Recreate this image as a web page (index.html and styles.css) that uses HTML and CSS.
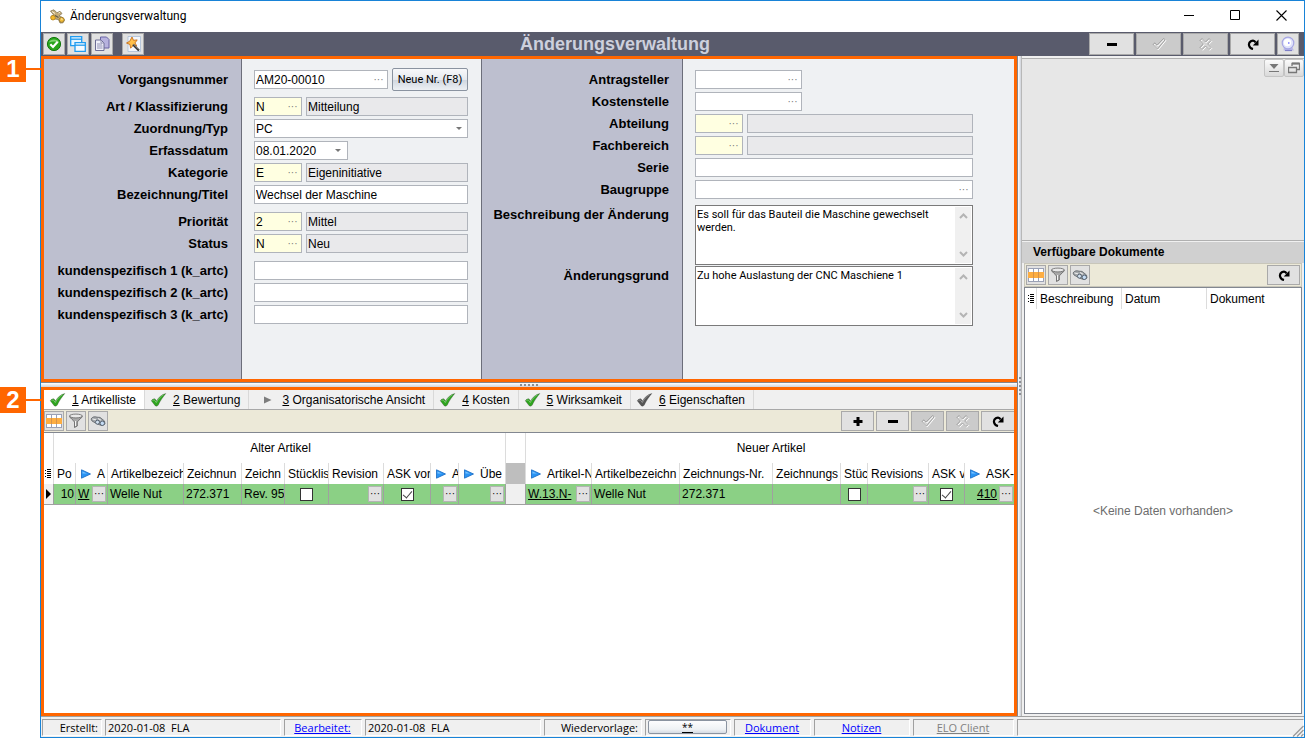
FILE: index.html
```html
<!DOCTYPE html>
<html lang="de">
<head>
<meta charset="utf-8">
<title>Änderungsverwaltung</title>
<link rel="stylesheet" href="styles.css">
</head>
<body>
<svg class="sprite" aria-hidden="true">
  <symbol id="i-check" viewBox="0 0 16 16"><path d="M.8 8.800C1.800 7 3.800 6.300 4.800 7.200L6 9C8 5.500 11 2.500 15.300 1.500 12.500 5 9.500 9 7.800 13 7 14.500 5 14.500 4.300 13.200z" fill="currentColor" stroke="#222" stroke-opacity=".35" stroke-width=".8"/><path d="M2 8.500C3.500 7.500 4.300 8 5.800 10.500 8 6.500 10.500 4 13 2.800" fill="none" stroke="#fff" stroke-opacity=".35"/></symbol>
  <symbol id="i-play" viewBox="0 0 10 10"><path d="M.5.800 9.500 5 .5 9.200z" fill="#2a94f4" stroke="#1467c0" stroke-width=".8"/><path d="M1.500 2.500 6 4.600H1.500z" fill="#7cc4ff"/></symbol>
  <symbol id="i-tri" viewBox="0 0 10 10"><path d="M1 1.500 8.500 5 1 8.500z" fill="#7d7d7d"/></symbol>
  <symbol id="i-grid" viewBox="0 0 16 16"><path d="M0 1h16v14H0z" fill="#fff"/><path d="M0 1.500h16M0 14.500h16M.5 1v14M5.500 1v14M10.500 1v14M15.500 1v14" stroke="#9aa1b5" fill="none"/><path d="M0 5h16v6H0z" fill="#fdae42"/><path d="M5.500 5v6M10.500 5v6" stroke="#d8934a"/></symbol>
  <symbol id="i-funnel" viewBox="0 0 16 16"><path d="M1.500 3c0 2 4.500 4.500 5 6v5.500l2.800-1.500V9c.5-1.500 5-4 5-6z" fill="#a9a9a9" stroke="#5f5f5f" stroke-width=".8"/><ellipse cx="7.900" cy="3" rx="6.400" ry="1.900" fill="#e9e9e9" stroke="#666" stroke-width=".8"/><path d="M7.500 8v5" stroke="#f4f4f4"/></symbol>
  <symbol id="i-binoc" viewBox="0 0 16 16"><path d="M1 6C2.500 3.500 5 3.500 7 4.200l3 .2 4.500 3.600.5 3-3 1.500-3.500-1-3-1.500-3.500-2z" fill="#a3a7ab" stroke="#5a5f65" stroke-width=".8"/><circle cx="7.500" cy="9.200" r="2" fill="#d3e2f0" stroke="#4f5b6a" stroke-width=".9"/><circle cx="12.300" cy="10.300" r="2.200" fill="#c5dcf5" stroke="#4f5b6a" stroke-width=".9"/><path d="M2.500 6 6 6.800M8 5.500l3 1.700" stroke="#eee"/></symbol>
  <symbol id="i-plus" viewBox="0 0 12 12"><path d="M6 2v9M1.500 6.500h9" stroke="#000" stroke-width="3"/></symbol>
  <symbol id="i-minus" viewBox="0 0 12 12"><path d="M1 6.500h10" stroke="#000" stroke-width="3"/></symbol>
  <symbol id="i-okoff" viewBox="0 0 16 16"><path d="M2 8.500 4 6.800l2 2.400L12.500 2.500l1.700 1.200L6.500 13z" fill="#d6d6d6" stroke="#fff" transform="translate(.8 .8)"/><path d="M2 8.500 4 6.800l2 2.400L12.500 2.500l1.700 1.200L6.500 13z" fill="none" stroke="#a2a2a2"/></symbol>
  <symbol id="i-xoff" viewBox="0 0 16 16"><path d="M4 2.500 7.500 6 11 2.500l2 2L9.700 8l3.300 3.500-2 2L7.500 10 4 13.500l-2-2L5.300 8 2 4.500z" fill="#d4d4d4" stroke="#fff" transform="translate(.8 .8)"/><path d="M4 2.500 7.500 6 11 2.500l2 2L9.700 8l3.300 3.500-2 2L7.500 10 4 13.500l-2-2L5.300 8 2 4.500z" fill="none" stroke="#a2a2a2"/></symbol>
  <symbol id="i-redo" viewBox="0 0 12 12"><path d="M6 11C1.500 10 .8 5 3.800 3.300 5.800 2.300 7.800 3 8.600 4.600" fill="none" stroke="#000" stroke-width="2.200"/><path d="M11.500 1.500V7.500H5.800z"/></symbol>
  <symbol id="i-list" viewBox="0 0 8 10"><path d="M1 1.500h1M1 4.500h1M1 7.500h1M3 .5h4M3 2.500h4M3 4.500h4M3 6.500h4M3 8.500h4" stroke="#000" stroke-width="1"/></symbol>
</svg>

<div class="window">
  <header class="titlebar">
    <svg class="app-icon" viewBox="0 0 16 16"><path d="M1.500 3 5 1.800l3 3 3-1.500 2 2.200-3 2.500 3.500 1.500 2 2.500-1.500 2.800-3 .2-1.500-3.500L6 11l-3.500.5L2 8.500l2.500-1.700z" fill="#c3ab78" stroke="#857755" stroke-width=".8"/><circle cx="4" cy="9.700" r="2.300" fill="#f2b92c" stroke="#b5821a" stroke-width=".8"/><circle cx="12.700" cy="11.800" r="2.500" fill="#f1bd3a" stroke="#94712a" stroke-width=".8"/><path d="M3 3.500 6 5.500M9.500 5l1.500-.7M12 10.800l1.500.6" stroke="#f7efd9"/><path d="m6 7.500 3.500 2" stroke="#5d5746" stroke-width="1.200"/></svg>
    <span class="caption">Änderungsverwaltung</span>
    <button class="win-btn" aria-label="Minimieren"><svg viewBox="0 0 11 11"><path d="M0 5.500h10" stroke="#000"/></svg></button>
    <button class="win-btn" aria-label="Maximieren"><svg viewBox="0 0 11 11"><path d="M.5.500h9v9h-9z" fill="none" stroke="#000"/></svg></button>
    <button class="win-btn" aria-label="Schließen"><svg viewBox="0 0 11 11"><path d="M.5.500l10 10M10.500.500l-10 10" stroke="#000" stroke-width="1.100"/></svg></button>
  </header>

  <div class="toolbar">
    <div class="tools">
      <button class="tool" aria-label="Bestätigen"><svg viewBox="0 0 16 16"><circle cx="8" cy="8" r="6.600" fill="#28a51c" stroke="#14780d"/><path d="M2.800 6.500C4 2.500 12 2.500 13.200 6.500 10 4.800 6 5.500 2.800 6.500z" fill="#7ed46f"/><path d="M4.300 8.300 7 11l4.700-5.200" fill="none" stroke="#fff" stroke-width="2.200"/></svg></button>
      <button class="tool" aria-label="Fenster"><svg viewBox="0 0 16 16"><path d="M.7.700h11v9H.7z" fill="#e8f5ff" stroke="#1f9bf0" stroke-width="1.300"/><path d="M1 3.200h11" stroke="#1f9bf0" stroke-width="1.300"/><path d="M5 6.700h10.300v8.600H5z" fill="#f4faff" stroke="#1f9bf0" stroke-width="1.300"/><path d="M5 9.200h10.300" stroke="#1f9bf0" stroke-width="1.300"/></svg></button>
      <button class="tool" aria-label="Kopieren"><svg viewBox="0 0 16 16"><path d="M6.500 1h6l2.500 2.500V12H6.500z" fill="#b7b2de" stroke="#6a65a5"/><path d="M1.500 4h5.500l3 3v7.500H1.500z" fill="#f0f0fa" stroke="#6c6c94"/><path d="M7 4v3h3M3 8h5M3 10h5.500M3 12h5.500" fill="none" stroke="#9292b4"/></svg></button>
      <button class="tool wizard" aria-label="Assistent"><svg viewBox="0 0 16 16"><path d="M3 .5h12.500v15H3z" fill="#f3f7fd" stroke="#a9bcd6" stroke-width=".8"/><path d="m7 1 1.500 3.300 3.700-.4-2.200 3 1.800 3.200-3.600-.6-2.600 2.700-.6-3.700L1.500 7l3.300-1.800z" fill="#ffc04a" stroke="#c86e1c" stroke-width=".9"/><path d="m8 8.500 6 6" stroke="#333" stroke-width="2.200"/><path d="m8.300 8 5.500 5.500" stroke="#aaa" stroke-width=".7"/></svg></button>
    </div>
    <h1 class="heading">Änderungsverwaltung</h1>
    <div class="tools right">
      <button class="tool wide" aria-label="Löschen"><svg class="s12"><use href="#i-minus"/></svg></button>
      <button class="tool wide off" disabled aria-label="Speichern"><svg><use href="#i-okoff"/></svg></button>
      <button class="tool wide off" disabled aria-label="Verwerfen"><svg><use href="#i-xoff"/></svg></button>
      <button class="tool wide" aria-label="Aktualisieren"><svg class="s12"><use href="#i-redo"/></svg></button>
      <button class="tool" aria-label="Zeit"><svg viewBox="0 0 16 16"><path d="M4 11h8l2 3.500H3.500z" fill="#b9b9e8"/><circle cx="8" cy="7" r="5.800" fill="#dfe2fb" stroke="#a6a6e4" stroke-width="1.200"/><circle cx="7.500" cy="6.500" r="3.700" fill="#fff"/><path d="M8 7h1.500" stroke="#33f"/><path d="M5 14.500h7" stroke="#7f7fc8" stroke-width="1.200"/></svg></button>
    </div>
  </div>

  <main class="main">
    <div class="left">
      <section class="marked form">
        <span class="callout">1</span>
        <div class="labels first">
          <label for="nr">Vorgangsnummer</label>
          <label for="art" class="group">Art / Klassifizierung</label>
          <label for="typ">Zuordnung/Typ</label>
          <label for="datum">Erfassdatum</label>
          <label for="kat">Kategorie</label>
          <label for="titel">Bezeichnung/Titel</label>
          <label for="prio" class="group">Priorität</label>
          <label for="status">Status</label>
          <label for="k1" class="group">kundenspezifisch 1 (k_artc)</label>
          <label for="k2">kundenspezifisch 2 (k_artc)</label>
          <label for="k3">kundenspezifisch 3 (k_artc)</label>
        </div>
        <div class="fields first">
          <div class="row"><div class="box grow"><input id="nr" value="AM20-00010"><button class="dots" aria-label="Auswählen">···</button></div><button class="new-nr">Neue Nr. (F8)</button></div>
          <div class="row group"><div class="box key"><input id="art" value="N"><button class="dots" aria-label="Auswählen">···</button></div><input class="box ro" readonly value="Mitteilung" aria-label="Art"></div>
          <div class="row"><div class="box grow"><select id="typ"><option>PC</option></select><span class="arrow"></span></div></div>
          <div class="row"><div class="box date"><input id="datum" value="08.01.2020"><button class="drop" aria-label="Kalender"><span class="arrow"></span></button></div></div>
          <div class="row"><div class="box key"><input id="kat" value="E"><button class="dots" aria-label="Auswählen">···</button></div><input class="box ro" readonly value="Eigeninitiative" aria-label="Kategorie"></div>
          <div class="row"><input id="titel" class="box grow" value="Wechsel der Maschine"></div>
          <div class="row group"><div class="box key"><input id="prio" value="2"><button class="dots" aria-label="Auswählen">···</button></div><input class="box ro" readonly value="Mittel" aria-label="Priorität"></div>
          <div class="row"><div class="box key"><input id="status" value="N"><button class="dots" aria-label="Auswählen">···</button></div><input class="box ro" readonly value="Neu" aria-label="Status"></div>
          <div class="row group"><input id="k1" class="box grow"></div>
          <div class="row"><input id="k2" class="box grow"></div>
          <div class="row"><input id="k3" class="box grow"></div>
        </div>
        <div class="labels second">
          <label for="antrag">Antragsteller</label>
          <label for="kst">Kostenstelle</label>
          <label for="abt">Abteilung</label>
          <label for="fach">Fachbereich</label>
          <label for="serie">Serie</label>
          <label for="bau">Baugruppe</label>
          <div class="memo-labels">
            <label for="beschr">Beschreibung der Änderung</label>
            <label for="grund">Änderungsgrund</label>
          </div>
        </div>
        <div class="fields second">
          <div class="row"><div class="box code"><input id="antrag"><button class="dots" aria-label="Auswählen">···</button></div></div>
          <div class="row"><div class="box code"><input id="kst"><button class="dots" aria-label="Auswählen">···</button></div></div>
          <div class="row"><div class="box key"><input id="abt"><button class="dots" aria-label="Auswählen">···</button></div><input class="box ro" readonly aria-label="Abteilung"></div>
          <div class="row"><div class="box key"><input id="fach"><button class="dots" aria-label="Auswählen">···</button></div><input class="box ro" readonly aria-label="Fachbereich"></div>
          <div class="row"><input id="serie" class="box grow"></div>
          <div class="row"><div class="box grow"><input id="bau"><button class="dots" aria-label="Auswählen">···</button></div></div>
          <div class="memos">
            <div class="memo"><textarea id="beschr">Es soll für das Bauteil die Maschine gewechselt werden.</textarea><div class="scroll"><svg viewBox="0 0 9 6"><path d="M1 5 4.500 1.500 8 5"/></svg><svg viewBox="0 0 9 6"><path d="M1 1 4.500 4.500 8 1"/></svg></div></div>
            <div class="memo"><textarea id="grund">Zu hohe Auslastung der CNC Maschiene 1</textarea><div class="scroll"><svg viewBox="0 0 9 6"><path d="M1 5 4.500 1.500 8 5"/></svg><svg viewBox="0 0 9 6"><path d="M1 1 4.500 4.500 8 1"/></svg></div></div>
          </div>
        </div>
      </section>

      <div class="split-h"><i></i><i></i><i></i><i></i><i></i></div>

      <section class="marked list">
        <span class="callout">2</span>
        <nav class="tabs">
          <button class="tab active"><svg class="ok"><use href="#i-check"/></svg><span><u>1</u> Artikelliste</span></button>
          <button class="tab"><svg class="ok"><use href="#i-check"/></svg><span><u>2</u> Bewertung</span></button>
          <button class="tab"><svg class="tri"><use href="#i-tri"/></svg><span><u>3</u> Organisatorische Ansicht</span></button>
          <button class="tab"><svg class="ok"><use href="#i-check"/></svg><span><u>4</u> Kosten</span></button>
          <button class="tab"><svg class="ok"><use href="#i-check"/></svg><span><u>5</u> Wirksamkeit</span></button>
          <button class="tab"><svg class="ok gray"><use href="#i-check"/></svg><span><u>6</u> Eigenschaften</span></button>
        </nav>
        <div class="gridbar">
          <div class="tools">
            <button class="tool" aria-label="Spalten"><svg><use href="#i-grid"/></svg></button>
            <button class="tool" aria-label="Filter"><svg><use href="#i-funnel"/></svg></button>
            <button class="tool" aria-label="Suchen"><svg><use href="#i-binoc"/></svg></button>
          </div>
          <div class="tools">
            <button class="tool wide" aria-label="Hinzufügen"><svg class="s12"><use href="#i-plus"/></svg></button>
            <button class="tool wide" aria-label="Entfernen"><svg class="s12"><use href="#i-minus"/></svg></button>
            <button class="tool wide off" disabled aria-label="Speichern"><svg><use href="#i-okoff"/></svg></button>
            <button class="tool wide off" disabled aria-label="Verwerfen"><svg><use href="#i-xoff"/></svg></button>
            <button class="tool wide last" aria-label="Aktualisieren"><svg class="s12"><use href="#i-redo"/></svg></button>
          </div>
        </div>
        <table class="articles">
          <colgroup><col class="w10"><col class="w22"><col class="w32"><col class="w76"><col class="w58"><col class="w43"><col class="w44"><col class="w55"><col class="w47"><col class="w28"><col class="w47"><col class="w20"><col class="w66"><col class="w88"><col class="w93"><col class="w68"><col class="w27"><col class="w61"><col class="w36"><col></colgroup>
          <thead>
            <tr class="bands"><th></th><th colspan="10">Alter Artikel</th><th></th><th colspan="8">Neuer Artikel</th></tr>
            <tr class="heads">
              <th class="mark"><svg class="list-icon"><use href="#i-list"/></svg></th>
              <th>Po</th>
              <th><div class="cell"><svg class="play"><use href="#i-play"/></svg><span>A</span></div></th>
              <th>Artikelbezeich</th><th>Zeichnun</th><th>Zeichn</th><th>Stücklis</th><th>Revision</th><th>ASK vor</th>
              <th><div class="cell"><svg class="play"><use href="#i-play"/></svg><span>A</span></div></th>
              <th><div class="cell"><svg class="play"><use href="#i-play"/></svg><span>Übe</span></div></th>
              <th class="void"></th>
              <th><div class="cell"><svg class="play"><use href="#i-play"/></svg><span>Artikel-N</span></div></th>
              <th>Artikelbezeichn</th><th>Zeichnungs-Nr.</th><th>Zeichnungs</th><th>Stüc</th><th>Revisions</th><th>ASK v</th>
              <th><div class="cell"><svg class="play"><use href="#i-play"/></svg><span>ASK-</span></div></th>
            </tr>
          </thead>
          <tbody>
            <tr>
              <td class="mark"><span class="pointer"></span></td>
              <td class="num">10</td>
              <td><div class="cell"><a href="#">W</a><button class="more" aria-label="Auswählen">···</button></div></td>
              <td>Welle Nut</td><td>272.371</td><td>Rev. 95</td>
              <td class="mid"><input type="checkbox" aria-label="Stückliste alt"></td>
              <td><div class="cell end"><button class="more" aria-label="Auswählen">···</button></div></td>
              <td class="mid"><input type="checkbox" checked aria-label="ASK vorhanden alt"></td>
              <td><div class="cell end"><button class="more" aria-label="Auswählen">···</button></div></td>
              <td><div class="cell end"><button class="more" aria-label="Auswählen">···</button></div></td>
              <td class="void"></td>
              <td><div class="cell"><a href="#">W.13.N-</a><button class="more" aria-label="Auswählen">···</button></div></td>
              <td>Welle Nut</td><td>272.371</td><td></td>
              <td class="mid"><input type="checkbox" aria-label="Stückliste neu"></td>
              <td><div class="cell end"><button class="more" aria-label="Auswählen">···</button></div></td>
              <td class="mid"><input type="checkbox" checked aria-label="ASK vorhanden neu"></td>
              <td><div class="cell end"><a href="#">410</a><button class="more" aria-label="Auswählen">···</button></div></td>
            </tr>
          </tbody>
        </table>
      </section>
    </div>

    <div class="split-v"><i></i><i></i><i></i><i></i><i></i></div>

    <aside class="side">
      <div class="preview">
        <button aria-label="Einklappen"><svg viewBox="0 0 12 12"><path d="M1.500 2h9L6 7z" fill="#777"/><path d="M1 9.500h10" stroke="#777"/></svg></button>
        <button aria-label="Abdocken"><svg viewBox="0 0 12 12"><path d="M4 4V1.500h7.500v6H9" fill="none" stroke="#777" stroke-width="1.300"/><path d="M4 1.500h7.500" stroke="#777" stroke-width="2"/><path d="M.5 5.500h8v5h-8z" fill="none" stroke="#777" stroke-width="1.300"/></svg></button>
      </div>
      <h2 class="docs-title">Verfügbare Dokumente</h2>
      <div class="docs-bar">
        <div class="tools">
          <button class="tool" aria-label="Spalten"><svg><use href="#i-grid"/></svg></button>
          <button class="tool" aria-label="Filter"><svg><use href="#i-funnel"/></svg></button>
          <button class="tool" aria-label="Suchen"><svg><use href="#i-binoc"/></svg></button>
        </div>
        <button class="tool wide" aria-label="Aktualisieren"><svg class="s12"><use href="#i-redo"/></svg></button>
      </div>
      <div class="docs">
        <table>
          <colgroup><col class="w12"><col class="w85"><col class="w85"><col></colgroup>
          <thead><tr><th class="mark"><svg class="list-icon"><use href="#i-list"/></svg></th><th>Beschreibung</th><th>Datum</th><th>Dokument</th></tr></thead>
        </table>
        <p class="empty">&lt;Keine Daten vorhanden&gt;</p>
      </div>
    </aside>
  </main>

  <footer class="statusbar">
    <span class="st s60">Erstellt:</span>
    <span class="st s176">2020-01-08&nbsp; FLA</span>
    <span class="st s78"><a href="#">Bearbeitet:</a></span>
    <span class="st s176">2020-01-08&nbsp; FLA</span>
    <span class="st s98">Wiedervorlage:</span>
    <span class="st s86"><button><u>**</u></button></span>
    <span class="st s77"><a href="#">Dokument</a></span>
    <span class="st s96"><a href="#">Notizen</a></span>
    <span class="st s101"><a class="dim">ELO Client</a></span>
    <span class="st rest"></span>
    <svg class="grip" viewBox="0 0 12 12"><path d="M11.500 1 1 11.500M11.500 5 5 11.500M11.500 9 9 11.500" stroke="#9a9a9a" stroke-width="1.300"/></svg>
  </footer>
</div>
</body>
</html>
```
FILE: styles.css
```css
:root {
  --orange: #ff6600;
  --arial: "Liberation Sans", Arial, sans-serif;
  --segoe: "Open Sans", "Noto Sans", sans-serif;
  --tahoma: Roboto, Tahoma, sans-serif;
}

* { box-sizing: border-box; }

body {
  margin: 0;
  height: 100vh;
  padding-left: 40px;
  background: #fff;
  color: #000;
  font: 12px/14px var(--arial);
}

button, input, select, textarea {
  margin: 0;
  padding: 0;
  border: 0;
  border-radius: 0;
  background: none;
  color: inherit;
  font: inherit;
  outline: 0;
}

.sprite { position: absolute; width: 0; height: 0; }

.window {
  display: flex;
  flex-direction: column;
  height: 100%;
  border: 1px solid #1883d7;
  background: #f0f0f0;
}

/* Title bar */
.titlebar {
  display: flex;
  align-items: center;
  height: 31px;
  padding: 0 0 2px 8px;
  background: #fff;
}
.app-icon { width: 16px; height: 16px; margin-right: 5px; }
.caption { flex: 1; font-family: var(--tahoma); }
.win-btn { width: 46px; height: 28px; }
.win-btn svg { display: block; width: 11px; height: 11px; margin: auto; }

/* Toolbars */
.toolbar {
  display: grid;
  grid-template-columns: 1fr auto 1fr;
  align-items: center;
  height: 24px;
  padding: 0 5px 0 2px;
  background: #595b6c;
}
.tools { display: flex; gap: 2px; }
.tools.right { justify-content: flex-end; }
.heading { margin: 0; padding-right: 112px; color: #cdd0dd; font-size: 18px; line-height: 22px; }
.tool {
  display: flex;
  align-items: center;
  justify-content: center;
  width: 22px;
  height: 22px;
  border: 1px solid #a9a9a9;
  background: #e1e1e1;
}
.tool svg { width: 16px; height: 16px; }
.tool svg.s12 { width: 12px; height: 12px; }
.tool.wide { width: 45px; }
.tool.off { background: #cbcbcb; }
.tool.wizard { margin-left: 7px; }

/* Main split */
.main { display: flex; flex: 1; min-height: 0; }
.left { display: flex; flex: 1; flex-direction: column; min-width: 0; }
.marked { position: relative; border: 3px solid var(--orange); }

.callout {
  position: absolute;
  top: -3px;
  left: -44px;
  width: 26px;
  height: 26px;
  background: var(--orange);
  color: #fff;
  font-size: 24px;
  font-weight: bold;
  line-height: 26px;
  text-align: center;
}
.callout::after {
  content: "";
  position: absolute;
  top: 12px;
  left: 26px;
  width: 16px;
  height: 2px;
  background: var(--orange);
}

.split-h {
  display: flex;
  justify-content: center;
  align-items: center;
  gap: 2px;
  height: 5px;
  border-top: 1px solid #82858c;
  background: linear-gradient(#fff, #cfd3da);
}
.split-v {
  display: flex;
  flex-direction: column;
  justify-content: center;
  align-items: center;
  gap: 2px;
  width: 4px;
  border-left: 1px solid #82858c;
  background: linear-gradient(90deg, #fff, #cfd3da);
}
.split-h i, .split-v i { width: 2px; height: 2px; background: #8b8e94; }

/* Form */
.form { display: flex; background: #eff1f3; }
.labels, .fields {
  display: flex;
  flex-direction: column;
  gap: 3px;
  padding: 11px 13px 53px 0;
}
.labels {
  border-right: 1px solid #6c6e7a;
  background: #bdbfcf;
  font-size: 13px;
  font-weight: bold;
  text-align: right;
}
.labels label { height: 19px; line-height: 19px; white-space: nowrap; }
.labels.first { width: 198px; }
.labels.second { width: 202px; border-left: 1px solid #6c6e7a; }
.labels .group, .fields .group { margin-top: 5px; }
.fields { padding-left: 12px; }
.fields.first { width: 239px; }
.fields.second { width: 303px; }
.row { display: flex; align-items: center; gap: 4px; height: 19px; }

.box {
  display: flex;
  align-items: center;
  min-width: 0;
  height: 19px;
  border: 1px solid #b0b4bb;
  background: #fff;
}
input.box { padding: 0 1px; }
.box input { flex: 1; width: 0; min-width: 0; padding-left: 1px; }
.box select { flex: 1; padding-left: 1px; appearance: none; }
.box.grow, .box.ro { flex: 1; }
.box.key { width: 48px; background: #ffffe1; }
.box.ro { background: #e9e9eb; }
.box.date { width: 94px; }
.box.code { width: 107px; }
.dots { width: 17px; height: 17px; color: #777; font-size: 10px; line-height: 15px; }
.drop { width: 17px; height: 17px; }
.arrow {
  display: block;
  width: 6px;
  margin: 0 5px;
  border: 3px solid transparent;
  border-top-color: #777;
  border-bottom: 0;
}
.new-nr {
  flex: none;
  width: 76px;
  height: 23px;
  border: 1px solid #8a93a0;
  border-radius: 2px;
  background: linear-gradient(#f7f8fa, #e6e9ee 50%, #cfd6df 51%, #edf0f4);
  font: 11px/14px var(--tahoma);
  white-space: nowrap;
}

.memo-labels { display: flex; flex-direction: column; gap: 42px; margin-top: 3px; }
.memos { display: flex; flex-direction: column; gap: 1px; margin-top: 3px; }
.memo { display: flex; height: 60px; padding: 1px; border: 1px solid #7a7a7a; background: #fff; }
.memo textarea {
  flex: 1;
  padding: 1px 0;
  overflow: hidden;
  resize: none;
  font: 11px/13px var(--tahoma);
}
.scroll {
  display: flex;
  flex-direction: column;
  justify-content: space-between;
  align-items: center;
  width: 16px;
  padding: 6px 0;
  background: #f0f0f0;
}
.scroll svg { width: 9px; height: 6px; fill: none; stroke: #b4b4b4; stroke-width: 2; }

/* Article list */
.list { display: flex; flex: 1; flex-direction: column; min-height: 0; background: #fff; }
.tabs { display: flex; height: 20px; border-bottom: 1px solid #a8a8a8; background: #f0f0f0; }
.tab {
  display: flex;
  align-items: center;
  gap: 6px;
  padding: 0 8px 0 5px;
  border-right: 1px solid #d9d9d9;
  white-space: nowrap;
}
.tab.active { background: #fff; }
.tab .ok { width: 17px; height: 16px; color: #2fa51f; }
.tab .ok.gray { color: #555; }
.tab .tri { width: 10px; height: 10px; margin: 0 3px 0 9px; }
.gridbar {
  display: flex;
  justify-content: space-between;
  padding: 1px 0;
  border-bottom: 1px solid #828790;
  background: #ece9d8;
}
.gridbar .tool, .docs-bar .tool { width: 20px; height: 20px; }
.gridbar .tool.wide { width: 33px; }
.gridbar .tool.wide.last { border-right: 0; }
.docs-bar .tool.wide { width: 33px; }

table { width: 100%; border-collapse: separate; border-spacing: 0; table-layout: fixed; }
th, td {
  padding: 0 1px 0 3px;
  overflow: hidden;
  border-right: 1px solid #dcdcdc;
  font-weight: normal;
  text-align: left;
  white-space: nowrap;
}
th:last-child, td:last-child { border-right: 0; }
.bands th { height: 30px; text-align: center; }
.heads th { height: 21px; }
.articles td { height: 21px; padding-left: 2px; border-right-color: #a0a0a0; border-bottom: 1px solid #a0a0a0; background: #8bd085; }
.articles .void { padding: 0; background: #f0f0f0; }
.articles th.void { background: #bebebe; }
.articles td.mark { padding: 0; background: #f0f0f0; }
.articles .num { text-align: right; }
.articles .mid { padding: 0; text-align: center; }
.articles th.mark { padding: 0; }
.list-icon { display: block; width: 8px; height: 10px; }
.pointer {
  display: block;
  width: 5px;
  margin-left: 2px;
  border: 5px solid transparent;
  border-left-color: #000;
  border-right: 0;
}
.cell { display: flex; align-items: center; gap: 2px; }
.cell a { flex: 1; min-width: 0; color: inherit; }
.cell.end { justify-content: flex-end; }
.cell.end a { text-align: right; }
.play { flex: none; width: 10px; height: 10px; margin: 0 4px 0 2px; }
.more {
  flex: none;
  width: 14px;
  height: 16px;
  border: 1px solid #b4b4b4;
  background: #e1e1e1;
  font-size: 10px;
  line-height: 12px;
}
input[type="checkbox"] {
  display: block;
  width: 13px;
  height: 13px;
  margin: auto;
  border: 1px solid #333;
  background: #fff;
  appearance: none;
}
input[type="checkbox"]:checked::before {
  content: "";
  display: block;
  width: 4px;
  height: 8px;
  margin: 0 auto;
  border: solid #444;
  border-width: 0 1px 1px 0;
  transform: rotate(40deg);
}

.w10 { width: 10px; }
.w12 { width: 12px; }
.w20 { width: 20px; }
.w22 { width: 22px; }
.w27 { width: 27px; }
.w28 { width: 28px; }
.w32 { width: 32px; }
.w36 { width: 36px; }
.w43 { width: 43px; }
.w44 { width: 44px; }
.w47 { width: 47px; }
.w55 { width: 55px; }
.w58 { width: 58px; }
.w61 { width: 61px; }
.w66 { width: 66px; }
.w68 { width: 68px; }
.w76 { width: 76px; }
.w85 { width: 85px; }
.w88 { width: 88px; }
.w93 { width: 93px; }

/* Side panel */
.side {
  display: flex;
  flex-direction: column;
  width: 283px;
  padding: 2px 0 2px;
  border-left: 1px solid #b8b8b8;
}
.preview {
  display: flex;
  justify-content: flex-end;
  height: 183px;
  border: 1px solid #b0b0b0;
  border-width: 1px 0;
  background: #e7e7e7;
}
.preview button {
  width: 20px;
  height: 18px;
  border: 1px solid #c4c4c4;
  border-radius: 2px;
  background: linear-gradient(#fbfbfb, #d9d9d9);
}
.preview svg { display: block; width: 12px; height: 12px; margin: auto; }
.docs-title { margin: 1px 0 0; padding: 0 11px; background: #d0d0d0; font-size: 12px; line-height: 21px; }
.docs-bar {
  display: flex;
  justify-content: space-between;
  margin: 0 2px;
  padding: 1px;
  border: 1px solid #c8c6ba;
  background: #ece9d8;
}
.docs {
  display: flex;
  flex: 1;
  flex-direction: column;
  margin: 0 2px;
  border: 1px solid #828790;
  background: #fff;
}
.docs th { height: 21px; }
.docs th.mark { padding: 0 0 0 2px; }
.docs .empty { margin: auto; color: #6d6d6d; }

/* Status bar */
.statusbar {
  position: relative;
  display: flex;
  gap: 3px;
  height: 21px;
  padding: 2px 0 1px 1px;
  border-top: 1px solid #a0a0a0;
  font-family: var(--segoe);
  font-size: 11px;
}
.st {
  height: 17px;
  padding: 0 3px 0 2px;
  border: 1px solid;
  border-color: #a0a0a0 #fff #fff #a0a0a0;
  line-height: 16px;
  text-align: center;
  white-space: nowrap;
}
.st a { color: #00f; text-decoration: underline; }
.st a.dim { color: #808080; }
.st button {
  display: block;
  width: 100%;
  height: 14px;
  border: 1px solid #8a93a0;
  border-radius: 2px;
  background: linear-gradient(#fdfdfe, #eef1f4 70%, #d5dbe3);
  font-size: 10px;
  line-height: 12px;
}
.s60 { width: 60px; text-align: right; }
.s77 { width: 77px; }
.s78 { width: 78px; }
.s86 { width: 86px; }
.s96 { width: 96px; }
.s98 { width: 98px; text-align: right; }
.s101 { width: 101px; }
.s176 { width: 176px; text-align: left; }
.rest { flex: 1; }
.grip { position: absolute; right: 0; bottom: 0; width: 12px; height: 12px; }
```
